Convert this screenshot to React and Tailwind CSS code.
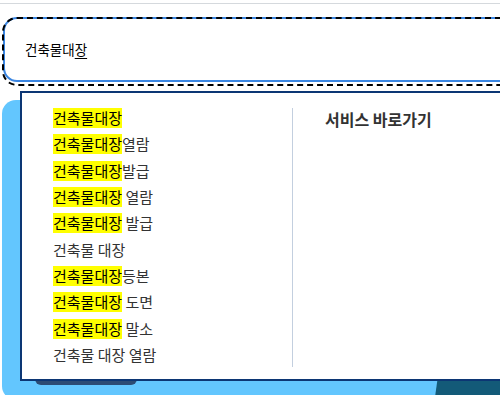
import React from 'react';

const font = { fontFamily: '"Noto Sans CJK KR", "Noto Sans", sans-serif' };

const suggestions = [
  { hit: '건축물대장', rest: '' },
  { hit: '건축물대장', rest: '열람' },
  { hit: '건축물대장', rest: '발급' },
  { hit: '건축물대장', rest: ' 열람' },
  { hit: '건축물대장', rest: ' 발급' },
  { hit: '', rest: '건축물 대장' },
  { hit: '건축물대장', rest: '등본' },
  { hit: '건축물대장', rest: ' 도면' },
  { hit: '건축물대장', rest: ' 말소' },
  { hit: '', rest: '건축물 대장 열람' },
];

export default function App() {
  return (
    <div className="relative isolate w-[500px] h-[395px] overflow-hidden bg-white" style={font}>
      {/* top rule */}
      <div className="h-[3px]" />
      <div className="h-px bg-[#d5d9dd]" />

      {/* search input with focus ring */}
      <div className="mt-[13px] ml-[2px] w-[540px] h-[69px] rounded-[15px] border-2 border-dashed border-black">
        <div className="relative -z-10 -mt-[2px] -ml-[1px] h-[65px] rounded-[14px] border-2 border-[#3b86e2] bg-white flex items-center pl-[20px]">
          <span className="text-[13.5px] text-black leading-none">
            건축물대<u className="underline-offset-[3px]">장</u>
          </span>
        </div>
      </div>

      {/* blue section behind */}
      <div className="mt-[14px] ml-[2px] w-[540px] h-[300px] rounded-[14px] bg-[#63c6fe] flex items-end justify-between">
        <div className="ml-[33px] mb-[15px] w-[102px] h-[40px] rounded-b-[6px] bg-[#2c4b74]" />
        <div className="-mr-[4px] w-[110px] h-[20px] -skew-x-[8deg] bg-[#135a78]" />
      </div>

      {/* autocomplete dropdown */}
      <div className="absolute left-[20px] top-[91px] w-[520px] h-[290px] border-2 border-[#0c3674] bg-white flex">
        <ul className="w-[270px] pt-[12px] pl-[31px]">
          {suggestions.map((s, i) => (
            <li key={i} className="h-[26.33px] flex items-center text-[15px] text-[#333] whitespace-pre">
              {s.hit && <span className="bg-[#ffff00] text-black leading-[20px]">{s.hit}</span>}
              <span className="leading-[20px]">{s.rest}</span>
            </li>
          ))}
        </ul>
        <div className="mt-[15px] mb-[12px] border-l border-[#c3cfdf] pl-[32px]">
          <h3 className="mt-[1px] text-[16px] leading-[20px] font-bold text-[#333]">서비스 바로가기</h3>
        </div>
      </div>
    </div>
  );
}
